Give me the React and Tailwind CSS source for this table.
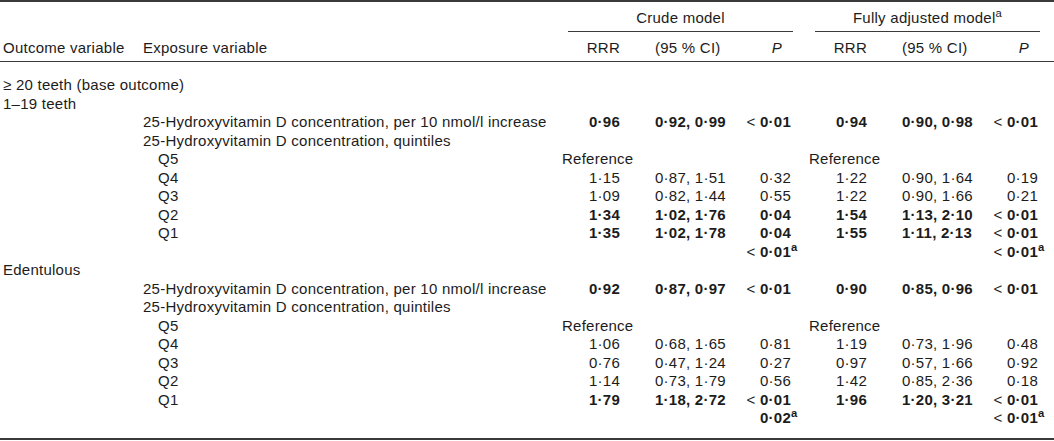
import React from 'react';

const grid =
  'grid grid-cols-[143px_419px_58px_117px_54px_18px_58px_117px_54px_16px]';

const Lt = ({ v, bold }) => (
  <>
    <span className="font-normal">&lt;</span> <span className={bold ? 'font-bold' : ''}>{v}</span>
  </>
);

const Sup = () => <sup className="inline-block w-0 text-left font-bold">a</sup>;

// one body row: [outcome, exposure, rrr, ci, p, rrr2, ci2, p2]
const Row = ({ outcome, exposure, q, r1, c1, p1, r2, c2, p2, bold }) => {
  const w = bold ? 'font-bold' : '';
  return (
    <div className={grid + ' leading-[18.5px] h-[18.5px]'}>
      <div className="pl-[3px] whitespace-nowrap">{outcome}</div>
      <div className={'whitespace-nowrap ' + (q ? 'pl-[15px]' : '')}>{exposure}</div>
      {r1 === 'Reference' ? (
        <div className="whitespace-nowrap">Reference</div>
      ) : (
        <div className={'text-right ' + w}>{r1}</div>
      )}
      <div className={'pl-[35px] whitespace-nowrap ' + w}>{c1}</div>
      <div className={'text-right whitespace-nowrap ' + w}>{p1}</div>
      <div />
      {r2 === 'Reference' ? (
        <div className="whitespace-nowrap">Reference</div>
      ) : (
        <div className={'text-right ' + w}>{r2}</div>
      )}
      <div className={'pl-[35px] whitespace-nowrap ' + w}>{c2}</div>
      <div className={'text-right whitespace-nowrap ' + w}>{p2}</div>
      <div />
    </div>
  );
};

const per10 = '25-Hydroxyvitamin D concentration, per 10 nmol/l increase';
const quint = '25-Hydroxyvitamin D concentration, quintiles';

export default function App() {
  return (
    <div className="w-[1054px] bg-white text-[#1c1c1c] text-[15px] tracking-[0.25px] font-['Liberation_Sans',Arial,sans-serif]">
      <div className="border-t-2 border-[#3a3a3a]">
        {/* group headings */}
        <div className={grid + ' h-[30px] pt-[7px] leading-[18.5px]'}>
          <div className="col-span-2" />
          <div className="col-span-3 ml-[6px] -mr-[2px] border-b border-[#3a3a3a] text-center">
            Crude model
          </div>
          <div />
          <div className="col-span-3 ml-[6px] -mr-[2px] border-b border-[#3a3a3a] text-center">
            Fully adjusted model<sup className="font-normal">a</sup>
          </div>
          <div />
        </div>

        {/* column headings */}
        <div className={grid + ' h-[30px] pt-[7px] leading-[18.5px] border-b-[1.5px] border-[#3a3a3a]'}>
          <div className="pl-[3px] whitespace-nowrap">Outcome variable</div>
          <div>Exposure variable</div>
          <div className="text-right">RRR</div>
          <div className="pl-[35px] whitespace-nowrap">(95 % CI)</div>
          <div className="text-right pr-[9px] italic">P</div>
          <div />
          <div className="text-right">RRR</div>
          <div className="pl-[35px] whitespace-nowrap">(95 % CI)</div>
          <div className="text-right pr-[9px] italic">P</div>
          <div />
        </div>
      </div>

      <div className="pt-[14px] pb-[10px] border-b-2 border-[#3a3a3a]">
        <Row outcome={<><span>≥</span> 20 teeth (base outcome)</>} />
        <Row outcome="1–19 teeth" />
        <Row exposure={per10} bold r1="0·96" c1="0·92, 0·99" p1={<Lt v="0·01" bold />} r2="0·94" c2="0·90, 0·98" p2={<Lt v="0·01" bold />} />
        <Row exposure={quint} />
        <Row exposure="Q5" q r1="Reference" r2="Reference" />
        <Row exposure="Q4" q r1="1·15" c1="0·87, 1·51" p1="0·32" r2="1·22" c2="0·90, 1·64" p2="0·19" />
        <Row exposure="Q3" q r1="1·09" c1="0·82, 1·44" p1="0·55" r2="1·22" c2="0·90, 1·66" p2="0·21" />
        <Row exposure="Q2" q bold r1="1·34" c1="1·02, 1·76" p1="0·04" r2="1·54" c2="1·13, 2·10" p2={<Lt v="0·01" bold />} />
        <Row exposure="Q1" q bold r1="1·35" c1="1·02, 1·78" p1="0·04" r2="1·55" c2="1·11, 2·13" p2={<Lt v="0·01" bold />} />
        <Row bold p1={<><Lt v="0·01" bold /><Sup /></>} p2={<><Lt v="0·01" bold /><Sup /></>} />
        <Row outcome="Edentulous" />
        <Row exposure={per10} bold r1="0·92" c1="0·87, 0·97" p1={<Lt v="0·01" bold />} r2="0·90" c2="0·85, 0·96" p2={<Lt v="0·01" bold />} />
        <Row exposure={quint} />
        <Row exposure="Q5" q r1="Reference" r2="Reference" />
        <Row exposure="Q4" q r1="1·06" c1="0·68, 1·65" p1="0·81" r2="1·19" c2="0·73, 1·96" p2="0·48" />
        <Row exposure="Q3" q r1="0·76" c1="0·47, 1·24" p1="0·27" r2="0·97" c2="0·57, 1·66" p2="0·92" />
        <Row exposure="Q2" q r1="1·14" c1="0·73, 1·79" p1="0·56" r2="1·42" c2="0·85, 2·36" p2="0·18" />
        <Row exposure="Q1" q bold r1="1·79" c1="1·18, 2·72" p1={<Lt v="0·01" bold />} r2="1·96" c2="1·20, 3·21" p2={<Lt v="0·01" bold />} />
        <Row bold p1={<>0·02<Sup /></>} p2={<><Lt v="0·01" bold /><Sup /></>} />
      </div>
    </div>
  );
}
